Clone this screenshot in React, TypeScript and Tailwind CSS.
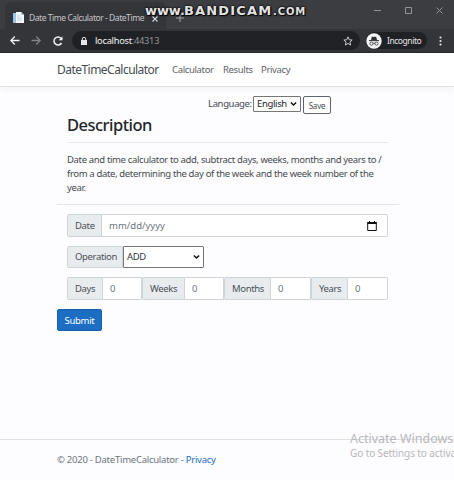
import React from "react";

const Chevron = ({ className }: { className: string }) => (
  <svg viewBox="0 0 8 6" className={className} fill="none" stroke="#111" strokeWidth="1.7">
    <path d="M1 1.2 4 4.2 7 1.2" />
  </svg>
);

function BrowserChrome() {
  return (
    <div className="relative h-[53px] shrink-0 bg-[#3c3d40] text-[#e4e5e8]">
      <div className="flex h-[29px] items-end">
        <div className="h-[25px] w-[5px] rounded-br-md bg-[#3c3d40]" />
        <div className="flex h-[27px] w-[161px] items-center rounded-t-md bg-[#343538] pl-2 pt-[4px]">
          <svg viewBox="0 0 12 12" className="h-3 w-3 shrink-0">
            <path d="M0 1h3v10H0z" fill="#9ec5e8" />
            <path d="M3 0h5l3 3v8H3z" fill="#f5f8fa" />
            <path d="M8 0v3h3" fill="#b4c6d5" />
            <path d="M4 4h3M4 6h5M4 8h5" stroke="#a9c4dc" strokeWidth=".7" />
          </svg>
          <div className="ml-1 w-[118px] whitespace-nowrap text-[8.5px] leading-3 tracking-[-0.45px] text-[#c4c5c8]">Date Time Calculator - DateTime</div>
          <svg viewBox="0 0 6 6" className="ml-[5px] mt-[2px] h-[6px] w-[6px] shrink-0" stroke="#d5d6d8" strokeWidth="1.1"><path d="m.5.5 5 5m0-5-5 5" /></svg>
        </div>
        <svg viewBox="0 0 8 8" className="mb-[7px] ml-[10px] h-2 w-2" stroke="#a2a3a5" strokeWidth="1.1"><path d="M4 0v8M0 4h8" /></svg>
        <div className="mb-[15px] ml-auto mr-[11px] flex items-center gap-[24px]">
          <svg viewBox="0 0 7 7" className="h-[7px] w-[7px]" stroke="#929396"><path d="M0 3.5h7" /></svg>
          <svg viewBox="0 0 7 7" className="h-[7px] w-[7px]" stroke="#929396" fill="none"><path d="M.5.5h6v6h-6z" /></svg>
          <svg viewBox="0 0 7 7" className="h-[7px] w-[7px]" stroke="#929396"><path d="m.5.5 6 6m0-6-6 6" /></svg>
        </div>
      </div>
      <div className="flex h-6 items-center border-b border-[#292a2d] bg-[#343538]">
        <svg viewBox="0 0 10 9" className="ml-[10px] h-[9px] w-[10px]" fill="none" stroke="#f1f2f3" strokeWidth="1.3"><path d="M9.5 4.5H1M4.8.5l-4 4 4 4" /></svg>
        <svg viewBox="0 0 10 9" className="ml-[11px] h-[9px] w-[10px]" fill="none" stroke="#838487" strokeWidth="1.3"><path d="M.5 4.5H9M5.2.5l4 4-4 4" /></svg>
        <svg viewBox="0 0 10 10" className="ml-[12px] h-[10px] w-[10px]" fill="none" stroke="#f1f2f3" strokeWidth="1.5"><path d="M8.5 7A4 4 0 1 1 8 2.3" /><path d="M9.5.3v4H5.7z" fill="#f1f2f3" stroke="none" /></svg>
        <div className="ml-[9px] flex h-[19px] w-[288px] items-center rounded-full bg-[#202124] pl-[9px] pr-[7px]">
          <svg viewBox="0 0 6 8" className="h-2 w-[6px]"><path d="M0 3h6v5H0z" fill="#e4e5e8" /><path d="M1.3 3V2a1.7 1.7 0 0 1 3.4 0v1" fill="none" stroke="#e4e5e8" /></svg>
          <span className="ml-2 whitespace-nowrap text-[9.3px] leading-3 tracking-[-0.28px] text-[#f1f2f3]">localhost<span className="text-[#939598]">:44313</span></span>
          <svg viewBox="0 0 24 24" className="ml-auto h-[10px] w-[10px]" fill="none" stroke="#d5d6d8" strokeWidth="2.2"><path d="m12 2 3 7 7 .7-5.3 4.8 1.6 7.2-6.3-3.8-6.3 3.8 1.6-7.2L2 9.7 9 9z" /></svg>
        </div>
        <div className="ml-[6px] flex h-[17px] w-[61px] items-center rounded-full bg-[#202124]">
          <svg viewBox="0 0 16 16" className="h-4 w-4 shrink-0">
            <circle cx="8" cy="8" r="7.7" fill="#f4f5f6" />
            <path d="m5 7 .8-3.3h1.3l.9.3.9-.3h1.3L11 7z" fill="#303134" /><path d="M3 7.6h10" stroke="#303134" />
            <g fill="none" stroke="#303134" strokeWidth=".8"><circle cx="5.5" cy="10.6" r="1.6" /><circle cx="10.5" cy="10.6" r="1.6" /><path d="M7.1 10.3q.9-.5 1.8 0" /></g>
          </svg>
          <span className="ml-[5px] text-[8.5px] leading-3 tracking-[-0.45px]">Incognito</span>
        </div>
        <svg viewBox="0 0 3 10" className="ml-[12px] h-[10px] w-[3px]" fill="#e4e5e8"><circle cx="1.5" cy="1.5" r="1.1" /><circle cx="1.5" cy="5" r="1.1" /><circle cx="1.5" cy="8.5" r="1.1" /></svg>
      </div>
      <div className="absolute left-[145px] top-[2px] flex h-[17px] w-[164px] items-baseline whitespace-nowrap font-['DejaVu_Sans'] font-bold leading-[17px] text-[#e2e2e3] [text-shadow:0_0_2px_#000,0_0_2px_#000,1px_1px_1px_#000]">
        <span className="w-[39px] text-[13px] tracking-[-0.1px]">www.</span>
        <span className="w-[89px] text-[13px] tracking-[1.15px]">BANDICAM</span>
        <span className="text-[10px] tracking-[0.9px]">.COM</span>
      </div>
    </div>
  );
}

const label = "flex h-full shrink-0 items-center rounded-l-[2px] border border-[#ced4da] bg-[#e9ecef] pl-[7px] text-[#495057]";
const field = "flex h-full items-center border border-l-0 border-[#ced4da] bg-white pl-[7px] text-[#6c757d]";

function Form() {
  return (
    <>
      <div className="ml-[10px] mt-[9px] flex h-[23px] w-[321px]">
        <div className={`${label} w-[35px]`}>Date</div>
        <div className={`${field} flex-1 rounded-r-[2px] pr-[10px] tracking-[0px]`}>
          mm/dd/yyyy
          <svg viewBox="0 0 10 10" className="ml-auto h-[10px] w-[10px]"><path d="M.7 1.5h8.6v8H.7z" fill="none" stroke="#111" /><path d="M.5 1h9v2h-9zM2 0h1v2H2zM7 0h1v2H7z" fill="#111" /></svg>
        </div>
      </div>
      <div className="ml-[10px] mt-[9px] flex h-[22px]">
        <div className={`${label} w-[56px]`}>Operation</div>
        <div className="flex w-[81px] items-center justify-between rounded-[1px] border border-[#767676] bg-white pl-[3px] pr-[3px] text-[#343a40]">ADD<Chevron className="h-[6px] w-[7px]" /></div>
      </div>
      <div className="ml-[10px] mt-[9px] flex h-[23px] w-[321px]">
        <div className={`${label} w-[36px]`}>Days</div><div className={`${field} w-[39px]`}>0</div>
        <div className={`${label} w-[43px]`}>Weeks</div><div className={`${field} w-[39px]`}>0</div>
        <div className={`${label} w-[47px]`}>Months</div><div className={`${field} w-[40px]`}>0</div>
        <div className={`${label} w-[37px]`}>Years</div><div className={`${field} w-[40px] rounded-r-[2px]`}>0</div>
      </div>
      <button className="mt-[9px] flex h-[22px] w-[45px] items-center justify-center rounded-[2px] border border-[#1861ac] bg-[#1b6ec2] pt-px tracking-[-0.3px] text-white">Submit</button>
    </>
  );
}

export default function App() {
  return (
    <div className="relative flex h-[480px] w-[454px] flex-col overflow-hidden bg-[#fdfcfe] font-['Noto_Sans',sans-serif] text-[9.5px] leading-[14px] tracking-[-0.35px] text-[#454b50]">
      <BrowserChrome />
      <nav className="flex h-[34px] shrink-0 items-center border-b border-[#dee2e6] bg-white pl-[57px] shadow-[0_2px_7px_rgba(0,0,0,0.05)]">
        <span className="w-[115px] text-[12px] tracking-[-0.53px]">DateTimeCalculator</span>
        <span className="w-[51px] text-[#5c6166]">Calculator</span><span className="w-[38px] text-[#5c6166]">Results</span><span className="text-[#5c6166]">Privacy</span>
      </nav>
      <main className="ml-[57px] flex h-[352px] w-[341px] shrink-0 flex-col">
        <div className="mt-[9px] flex h-[18px] items-start pl-[151px]">
          <span className="w-[45px] whitespace-nowrap pt-[1px]">Language:</span>
          <div className="flex h-4 w-12 items-center justify-between rounded-[1px] border border-[#767676] bg-white pl-[3px] pr-[3px] text-[#212529]">English<Chevron className="h-[6px] w-[7px]" /></div>
          <button className="ml-[2px] flex h-[18px] w-7 items-center justify-center rounded-[2px] border border-[#5f666d] bg-white pt-[2px] text-[8px] tracking-[-0.2px]">Save</button>
        </div>
        <h1 className="ml-[10px] h-[28px] whitespace-nowrap text-[16.5px] font-medium leading-[21px] tracking-[-0.52px] text-[#212529]">Description</h1>
        <div className="ml-[10px] h-px w-[321px] bg-[#e9e9ec]" />
        <p className="ml-[10px] mt-[10px] h-[42px] whitespace-nowrap">
          Date and time calculator to add, subtract days, weeks, months and years to /<br />
          from a date, determining the day of the week and the week number of the<br />
          year.
        </p>
        <div className="mt-[9px] h-px bg-[#e5e5e9]" />
        <Form />
      </main>
      <footer className="h-[41px] border-t border-[#dee2e6] pl-[57px] pt-[13px] tracking-[-0.25px] text-[#6c757d]">
        © 2020 - DateTimeCalculator - <a className="text-[#1b6ec2]">Privacy</a>
      </footer>
      <div className="absolute left-[350px] top-[430px] whitespace-nowrap tracking-normal text-[#b8b8ba]">
        <div className="text-[12.5px] leading-[17px]">Activate Windows</div>
        <div className="text-[10px] leading-[13px] tracking-[-0.1px]">Go to Settings to activa</div>
      </div>
    </div>
  );
}
